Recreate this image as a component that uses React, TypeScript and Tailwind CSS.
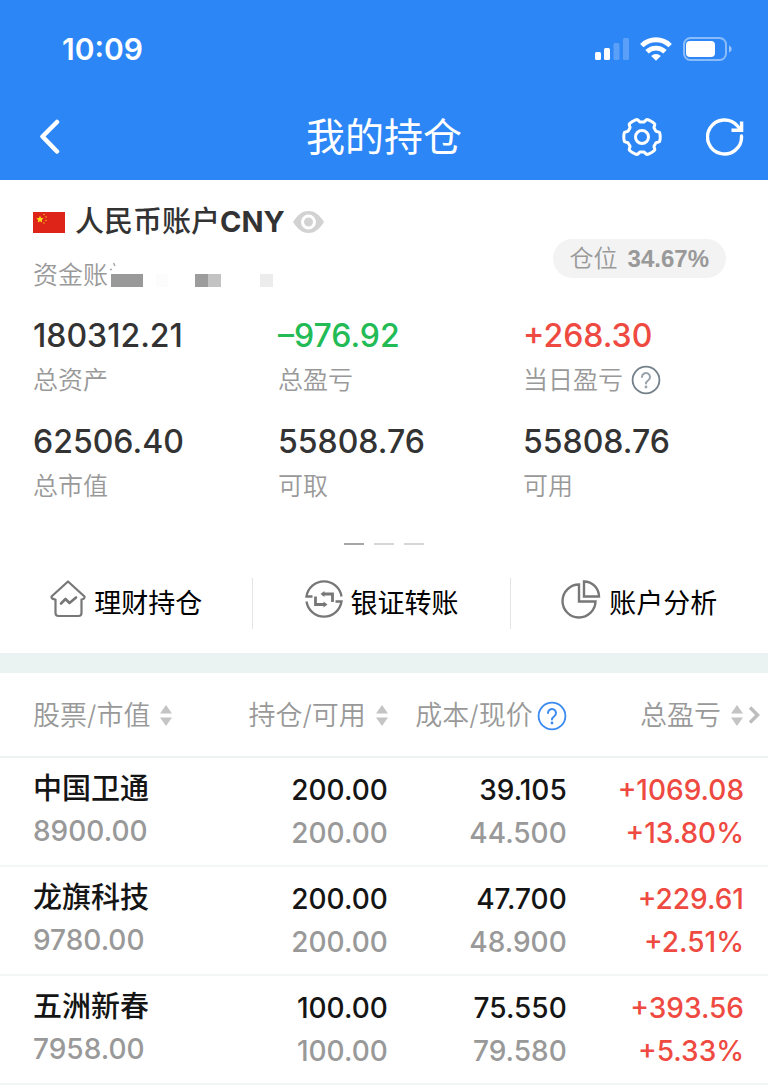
import React from 'react';

interface Holding {
  name: string;
  value: string;
  held: string;
  available: string;
  cost: string;
  price: string;
  profit: string;
  rate: string;
}

const HOLDINGS: Holding[] = [
  { name: '中国卫通', value: '8900.00', held: '200.00', available: '200.00', cost: '39.105', price: '44.500', profit: '+1069.08', rate: '+13.80%' },
  { name: '龙旗科技', value: '9780.00', held: '200.00', available: '200.00', cost: '47.700', price: '48.900', profit: '+229.61', rate: '+2.51%' },
  { name: '五洲新春', value: '7958.00', held: '100.00', available: '100.00', cost: '75.550', price: '79.580', profit: '+393.56', rate: '+5.33%' },
];

const SUMMARY = [
  { label: '总资产', value: '180312.21', color: 'text-[#333333]' },
  { label: '总盈亏', value: '–976.92', color: 'text-[#22bb55]' },
  { label: '当日盈亏', value: '+268.30', color: 'text-[#ee4a41]', help: true },
  { label: '总市值', value: '62506.40', color: 'text-[#333333]' },
  { label: '可取', value: '55808.76', color: 'text-[#333333]' },
  { label: '可用', value: '55808.76', color: 'text-[#333333]' },
];

// Six flat lobes with a shallow notch between each pair
const GEAR_PATH =
  Array.from({ length: 120 }, (_, i) => {
    const deg = i * 3;
    const fromLobe = Math.abs(((deg + 30) % 60) - 30);
    const t = Math.min(1, Math.max(0, (fromLobe - 14) / 9));
    const r = 18.2 - 3.2 * t * t * (3 - 2 * t);
    const rad = (deg * Math.PI) / 180;
    return `${i ? 'L' : 'M'}${(20 + r * Math.cos(rad)).toFixed(2)} ${(20 + r * Math.sin(rad)).toFixed(2)}`;
  }).join('') + 'Z';

const StatusBar = () => (
  <div className="flex h-[98px] items-center justify-between pl-[62px] pr-9">
    <span className="text-[30px] font-semibold leading-9">10:09</span>
    <div className="flex items-center gap-[11px]">
      <svg width="34" height="24" viewBox="0 0 34 24" fill="#fff">
        <rect x="0" y="15" width="6" height="8" rx="1.5" />
        <rect x="9" y="11" width="6" height="12" rx="1.5" />
        <rect x="18.500" y="6" width="6" height="17" rx="1.5" opacity=".22" />
        <rect x="28" y="1" width="6" height="22" rx="1.5" opacity=".22" />
      </svg>
      <svg width="32" height="24" viewBox="0 0 32 24" fill="none" stroke="#fff" strokeWidth="4.800">
        <path d="M1.800 8.600a20.200 20.200 0 0 1 28.400 0" />
        <path d="M7 14.800a13 13 0 0 1 18 0" />
        <path d="M16 23.800l-4.800-4.800a6.800 6.800 0 0 1 9.600 0z" fill="#fff" stroke="none" />
      </svg>
      <svg width="49" height="24" viewBox="0 0 49 24" fill="none">
        <rect x="1" y="1" width="42" height="22" rx="6.500" stroke="#fff" strokeOpacity=".45" strokeWidth="2" />
        <rect x="3" y="4" width="29" height="16" rx="4" fill="#fff" />
        <path d="M46 8.500c3.600 1.500 3.600 5.500 0 7z" fill="#fff" opacity=".5" />
      </svg>
    </div>
  </div>
);

const TitleBar = () => (
  <div className="grid h-[82px] grid-cols-[1fr_auto_1fr] items-center px-6 pb-1">
    <button type="button" aria-label="返回" className="justify-self-start pl-[14px]">
      <svg width="24" height="36" viewBox="0 0 24 36" fill="none" stroke="#fff" strokeWidth="4.500" strokeLinecap="round" strokeLinejoin="round">
        <path d="M19 3L4.500 17.500L19 32.500" />
      </svg>
    </button>
    <h1 className="text-[39px] font-normal leading-[48px]">我的持仓</h1>
    <div className="flex items-center gap-11 justify-self-end">
      <button type="button" aria-label="设置">
        <svg width="40" height="40" viewBox="0 0 40 40" fill="none" stroke="#fff" strokeWidth="3" strokeLinejoin="round">
          <path d={GEAR_PATH} />
          <circle cx="20" cy="20" r="6.500" />
        </svg>
      </button>
      <button type="button" aria-label="刷新">
        <svg width="38" height="40" viewBox="0 0 38 40" fill="none" stroke="#fff" strokeWidth="3.400">
          <path d="M35.500 19A17 17 0 1 1 31.500 9L35 13" strokeLinecap="round" />
          <path d="M35.600 4.500V13.300H25.500" />
        </svg>
      </button>
    </div>
  </div>
);

const Flag = () => (
  <svg width="32" height="21" viewBox="0 0 32 21">
    <rect width="32" height="21" fill="#de2318" />
    <path d="M7 3.800l1.100 2.200 2.500.3-1.800 1.700.4 2.400L7 9.200l-2.200 1.200.4-2.400-1.800-1.700 2.500-.3z" fill="#ffd91a" />
    <g fill="#f3b51a">
      <circle cx="11" cy="2.500" r=".8" />
      <circle cx="13" cy="5" r=".8" />
      <circle cx="13" cy="8.500" r=".8" />
      <circle cx="11" cy="11" r=".8" />
    </g>
  </svg>
);

const HelpIcon = ({ color, mark }: { color: string; mark: string }) => (
  <svg width="30" height="30" viewBox="0 0 30 30" fill="none" strokeLinecap="round">
    <circle cx="15" cy="15" r="13.400" stroke={color} strokeWidth="1.800" />
    <path d="M11 12a4 4 0 1 1 6.300 3.200c-1.500 1.100-2.300 1.700-2.300 3.300" stroke={mark} strokeWidth="2" />
    <circle cx="15" cy="22" r="1.400" fill={mark} />
  </svg>
);

const SortIcon = () => (
  <svg width="12" height="24" viewBox="0 0 12 24" fill="#c4c4c4">
    <path d="M6 1L12 9.500H0z" />
    <path d="M6 22L0 13.500H12z" />
  </svg>
);

// Account number is masked with grey tiles
const MaskedNumber = () => (
  <svg width="166" height="30" viewBox="0 0 166 30">
    <path d="M5.500 3l1.500 3M2 9.500h2" stroke="#aaa" strokeWidth="1.500" />
    <rect x="3" y="14" width="32" height="13" fill="#999" />
    <rect x="48" y="14" width="12" height="13" fill="#fcfcfc" />
    <rect x="87" y="14" width="13" height="13" fill="#9c9c9c" />
    <rect x="100" y="14" width="13" height="13" fill="#c3c3c3" />
    <rect x="152" y="14" width="13" height="13" fill="#ececec" />
  </svg>
);

const Account = () => (
  <section>
    <div className="flex items-end justify-between pl-[33px] pr-[42px] pt-6">
      <div>
        <div className="flex h-9 items-center">
          <Flag />
          <h2 className="ml-[10px] text-[29px] font-medium leading-9 text-[#333333]">
            人民币账户<span className="font-bold">CNY</span>
          </h2>
          <button type="button" aria-label="隐藏金额" className="ml-2">
            <svg width="31" height="24" viewBox="0 0 31 24">
              <path d="M0 12C5 4 10 1 15.500 1S26 4 31 12C26 20 21 23 15.500 23S5 20 0 12z" fill="#d2d2d2" />
              <circle cx="15.500" cy="12" r="6" fill="none" stroke="#fff" strokeWidth="3" />
            </svg>
          </button>
        </div>
        <div className="mt-[17px] flex h-9 items-center text-[25px] font-[350] leading-9 text-[#999999]">
          资金账
          <MaskedNumber />
        </div>
      </div>
      <div className="mb-[15px] flex h-[39px] items-center gap-[10px] rounded-full bg-[#f3f3f3] px-[17px] text-[24px] text-[#999999]">
        <span className="font-[350]">仓位</span>
        <span className="font-['Liberation_Sans'] font-bold">34.67%</span>
      </div>
    </div>

    <dl className="grid grid-cols-3 gap-y-[22px] pl-[33px] pt-[23px]">
      {SUMMARY.map((item) => (
        <div key={item.label} className="flex flex-col-reverse gap-1">
          <dt className="flex h-10 items-center gap-2 text-[25px] font-[350] leading-10 text-[#999999]">
            {item.label}
            {item.help && (
              <button type="button" aria-label="当日盈亏说明">
                <HelpIcon color="#74808a" mark="#98a2aa" />
              </button>
            )}
          </dt>
          <dd className={`text-[32px] font-medium leading-10 ${item.color}`}>{item.value}</dd>
        </div>
      ))}
    </dl>

    <div className="mt-[37px] flex justify-center gap-[10px]">
      <span className="h-[2px] w-5 bg-[#a6a6a6]" />
      <span className="h-[2px] w-5 bg-[#d6d6d6]" />
      <span className="h-[2px] w-5 bg-[#d6d6d6]" />
    </div>
  </section>
);

const HouseIcon = () => (
  <svg width="36" height="40" viewBox="0 0 36 40" fill="none" stroke="#777" strokeWidth="2.200" strokeLinejoin="round" strokeLinecap="round">
    <path d="M18 1.500L34.500 16.500Q35 19 31.500 19.500V33Q31.500 36 28.500 36H8.500Q5.500 36 5.500 33V19.500Q1 19 1.500 16.500z" />
    <path d="M11 23.500L15.500 19L19.500 23L26 17.500" strokeWidth="2.600" />
  </svg>
);

const TransferIcon = () => (
  <svg width="38" height="40" viewBox="0 0 38 40" fill="none" stroke="#777" strokeWidth="2.300">
    <path d="M7.500 16.500H1.500A17.700 17.700 0 0 1 36.500 16.500" />
    <path d="M30.500 21.500H36.500A17.700 17.700 0 0 1 1.500 21.500" />
    <path d="M17.500 14H27.500V22" strokeWidth="2.800" />
    <path d="M20.500 24.500H10.500V16.500" strokeWidth="2.800" />
    <path d="M19.500 11V17L15.500 14zM18.500 27.500V21.500L22.500 24.500z" fill="#777" stroke="none" />
  </svg>
);

const PieIcon = () => (
  <svg width="40" height="40" viewBox="0 0 40 40" fill="none" stroke="#777" strokeWidth="2.400">
    <path d="M18 4.500A16.500 16.500 0 1 0 34.500 21.500H18z" />
    <path d="M23 1.500V16.500H38A15 15 0 0 0 23 1.500z" />
  </svg>
);

const ACTIONS = [
  { label: '理财持仓', icon: <HouseIcon /> },
  { label: '银证转账', icon: <TransferIcon /> },
  { label: '账户分析', icon: <PieIcon /> },
];

const Actions = () => (
  <nav className="mt-[33px] mb-6 grid grid-cols-[33%_33.5%_33.5%] divide-x divide-[#e4e4e4]">
    {ACTIONS.map((action) => (
      <button key={action.label} type="button" className="flex h-[51px] items-center justify-center gap-2 text-[27px] font-normal leading-9 text-black">
        <span className="pb-2">{action.icon}</span>
        {action.label}
      </button>
    ))}
  </nav>
);

const HoldingsTable = () => (
  <table className="w-full table-fixed">
    <thead>
      <tr className="h-[84px] border-b-2 border-[#edf2f2] text-[27px] leading-9 text-[#999999]">
        <th className="w-[27%] p-0 pt-[2px] pl-[33px] font-[350]">
          <button type="button" className="flex items-center gap-[10px]">股票/市值<SortIcon /></button>
        </th>
        <th className="w-[23.500%] p-0 pt-[2px] font-[350]">
          <button type="button" className="ml-auto flex items-center gap-[10px]">持仓/可用<SortIcon /></button>
        </th>
        <th className="w-[23.300%] p-0 pt-[2px] font-[350]">
          <div className="flex items-center justify-end gap-1">
            成本/现价
            <button type="button" aria-label="成本说明"><HelpIcon color="#3b8af0" mark="#3b8af0" /></button>
          </div>
        </th>
        <th className="p-0 pt-[2px] pr-2 font-[350]">
          <div className="flex items-center justify-end gap-[5px]">
            <button type="button" className="flex items-center gap-[10px]">总盈亏<SortIcon /></button>
            <svg width="12" height="20" viewBox="0 0 12 20" fill="none" stroke="#bdbdbd" strokeWidth="3.500">
              <path d="M2 1.500L9.500 9L2 16.500" />
            </svg>
          </div>
        </th>
      </tr>
    </thead>
    <tbody className="text-[28px] font-medium leading-[43px]">
      {HOLDINGS.map((row) => (
        <tr key={row.name} className="border-b-2 border-[#f2f6f6] text-right align-top text-[#151515]">
          <td className="p-0 pt-[9px] pb-3 pl-[33px] text-left">
            <div className="text-[29px]">{row.name}</div>
            <div className="text-[#999999]">{row.value}</div>
          </td>
          <td className="p-0 pt-[11px]">
            <div>{row.held}</div>
            <div className="text-[#999999]">{row.available}</div>
          </td>
          <td className="p-0 pt-[11px]">
            <div>{row.cost}</div>
            <div className="text-[#999999]">{row.price}</div>
          </td>
          <td className="p-0 pt-[11px] pr-6 text-[#ee4a41]">
            <div>{row.profit}</div>
            <div>{row.rate}</div>
          </td>
        </tr>
      ))}
    </tbody>
  </table>
);

export default function App() {
  return (
    <main className="min-h-screen bg-white font-['Inter','Noto_Sans_CJK_SC',sans-serif]">
      <header className="bg-[#2c86f6] text-white">
        <StatusBar />
        <TitleBar />
      </header>
      <Account />
      <Actions />
      <div className="h-5 bg-[#ebf2f2]" />
      <HoldingsTable />
    </main>
  );
}
